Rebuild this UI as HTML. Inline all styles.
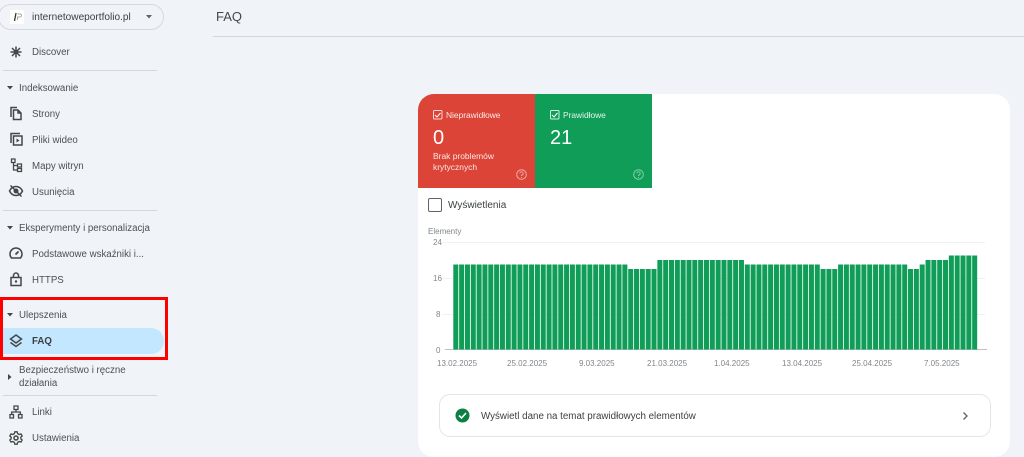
<!DOCTYPE html>
<html lang="pl"><head><meta charset="utf-8"><title>FAQ</title>
<style>
*{box-sizing:border-box}
html,body{margin:0;padding:0}
body{width:1024px;height:456px;overflow:hidden;background:#f0f4f9;position:relative;font-family:"Liberation Sans",sans-serif;color:#4d5051}
.t{position:absolute;white-space:nowrap;font-size:9.7px;line-height:13px}
.sep{position:absolute;left:3px;width:154px;height:1px;background:#d5d8db}
svg.i{position:absolute;width:16px;height:16px;fill:none;stroke:#444746;stroke-width:1.5}
.ax{position:absolute;font-size:8px;color:#80868b;line-height:10px;white-space:nowrap}
.g{position:absolute;left:442px;width:543px;height:1px;background:#f1f1f1}
</style></head><body>

<div style="position:absolute;left:-2px;top:4px;width:166px;height:26px;border:1px solid #d5d9dd;border-radius:13px"></div>
<div style="position:absolute;left:10px;top:10px;width:14px;height:14px;background:#fff"></div>
<svg style="position:absolute;left:10px;top:10px" width="14" height="14"><path d="M6 3L4.500 11" stroke="#333" stroke-width="1.300"/><path d="M7.500 4h2.500a1.500 1.500 0 0 1 0 3H7.500V10" stroke="#aaa" fill="none"/></svg>
<div class="t" style="left:32px;top:11px;font-size:10.100px;color:#3c4043">internetoweportfolio.pl</div>
<svg style="position:absolute;left:146px;top:15px" width="6" height="4"><path d="M0 0H6L3 3.500z" fill="#5f6368"/></svg>

<svg class="i" style="left:8px;top:44px" viewBox="0 0 16 16"><path d="M8 2.500V13.500M2.500 8H13.500M4 4L12 12M12 4L4 12" stroke-width="1.500"/><circle cx="8" cy="8" r="2" fill="#444746" stroke="none"/></svg>
<div class="t" style="left:32px;top:46px">Discover</div>
<div class="sep" style="top:70px"></div>

<svg style="position:absolute;left:7px;top:86px" width="6" height="4"><path d="M0 0H6L3 3.500z" fill="#444746"/></svg>
<div class="t" style="left:19px;top:82px">Indeksowanie</div>

<svg class="i" style="left:8px;top:105px" viewBox="0 0 16 16"><path d="M3 12V2.500H9M5.500 5H10L13 8V14.500H5.500zM10 5V8H13"/></svg>
<div class="t" style="left:32px;top:108px">Strony</div>
<svg class="i" style="left:8px;top:131px" viewBox="0 0 16 16"><path d="M3 12V2.500H12M5.500 5H14V14H5.500z"/><path d="M8.500 7.500L11.500 9.500L8.500 11.500z" fill="#444746" stroke="none"/></svg>
<div class="t" style="left:32px;top:134px">Pliki wideo</div>
<svg class="i" style="left:8px;top:157px" viewBox="0 0 16 16"><path d="M3.500 2H7V5.500H3.500zM9.500 7H13.500V10H9.500zM9.500 11.500H13.500V14.500H9.500zM5.500 5.500V13H9.500M5.500 8.500H9.500" stroke-width="1.300"/></svg>
<div class="t" style="left:32px;top:160px">Mapy witryn</div>
<svg class="i" style="left:8px;top:183px" viewBox="0 0 16 16"><path d="M1.500 8C3 5 5.500 3.500 8 3.500S13 5 14.500 8C13 11 10.500 12.500 8 12.500S3 11 1.500 8z"/><circle cx="8" cy="8" r="2.500" fill="#444746" stroke="none"/><path d="M2.500 2.500L13.500 13.500"/></svg>
<div class="t" style="left:32px;top:186px">Usunięcia</div>
<div class="sep" style="top:210px"></div>

<svg style="position:absolute;left:7px;top:226px" width="6" height="4"><path d="M0 0H6L3 3.500z" fill="#444746"/></svg>
<div class="t" style="left:19px;top:222px">Eksperymenty i personalizacja</div>

<svg class="i" style="left:8px;top:245px" viewBox="0 0 16 16"><path d="M3.500 13A6 6 0 1 1 12.500 13z"/><path d="M7.500 9.500L10.500 6.500" stroke-width="1.800"/></svg>
<div class="t" style="left:32px;top:248px">Podstawowe wskaźniki i...</div>
<svg class="i" style="left:8px;top:271px" viewBox="0 0 16 16"><path d="M3 6.500H13V14.500H3zM5.500 6.500V4.500A2.500 2.500 0 0 1 10.500 4.500V6.500"/><circle cx="8" cy="10.500" r="1.200" fill="#444746" stroke="none"/></svg>
<div class="t" style="left:32px;top:274px">HTTPS</div>

<div style="position:absolute;left:0;top:328px;width:164px;height:26px;background:#c2e7ff;border-radius:0 13px 13px 0"></div>
<div style="position:absolute;left:0;top:297px;width:168px;height:63px;border:3px solid #f00"></div>
<svg style="position:absolute;left:7px;top:313px" width="6" height="4"><path d="M0 0H6L3 3.500z" fill="#444746"/></svg>
<div class="t" style="left:19px;top:309px">Ulepszenia</div>
<svg class="i" style="left:8px;top:333px" viewBox="0 0 16 16"><path d="M8 2L13.500 6L8 10L2.500 6z"/><path d="M2.500 9.500L8 13.500L13.500 9.500"/></svg>
<div class="t" style="left:32px;top:335px;font-weight:bold;color:#3c4043">FAQ</div>

<svg style="position:absolute;left:8px;top:374px" width="4" height="6"><path d="M0 0V6L3.500 3z" fill="#444746"/></svg>
<div class="t" style="left:19px;top:364px">Bezpieczeństwo i ręczne</div>
<div class="t" style="left:19px;top:377px">działania</div>
<div class="sep" style="top:395px"></div>

<svg class="i" style="left:8px;top:404px" viewBox="0 0 16 16"><path d="M6 2H10V5.500H6zM2 10.500H5.500V14H2zM10.500 10.500H14V14H10.500zM8 5.500V8M3.700 10.500V8H12.300V10.500" stroke-width="1.300"/></svg>
<div class="t" style="left:32px;top:406px">Linki</div>
<svg class="i" style="left:8px;top:430px" viewBox="0 0 16 16"><path d="M6.800 1.800H9.200L9.600 3.600L11.200 4.500L13 3.900L14.200 6L12.800 7.200V8.800L14.200 10L13 12.100L11.200 11.500L9.600 12.400L9.200 14.200H6.800L6.400 12.400L4.800 11.500L3 12.100L1.800 10L3.200 8.800V7.200L1.800 6L3 3.900L4.800 4.500L6.400 3.600z" stroke-width="1.300"/><circle cx="8" cy="8" r="2"/></svg>
<div class="t" style="left:32px;top:432px">Ustawienia</div>

<div class="t" style="left:216px;top:9px;font-size:13px;line-height:16px;color:#444746">FAQ</div>
<div style="position:absolute;left:213px;top:36px;width:811px;height:1px;background:#d3d7db"></div>

<div style="position:absolute;left:418px;top:94px;width:592px;height:363px;background:#fff;border-radius:16px;overflow:hidden">
<div style="position:absolute;left:0;top:0;width:117px;height:94px;background:#db4437"></div>
<div style="position:absolute;left:117px;top:0;width:117px;height:94px;background:#0f9d58"></div>
</div>

<svg style="position:absolute;left:433px;top:110px" width="10" height="10"><rect x=".5" y=".5" width="8.500" height="8.500" rx="1" fill="none" stroke="#f6d5d2"/><path d="M2 5L4 7L7.500 3" fill="none" stroke="#fff"/></svg>
<div class="t" style="left:446px;top:109px;font-size:8.400px;color:#fde9e7">Nieprawidłowe</div>
<div class="t" style="left:433px;top:126px;font-size:20px;line-height:24px;color:#fff">0</div>
<div class="t" style="left:433px;top:151px;font-size:8.450px;line-height:11px;color:#fde9e7">Brak problemów<br>krytycznych</div>
<svg style="position:absolute;left:516px;top:169px" width="11" height="11"><circle cx="5.500" cy="5.500" r="4.800" fill="none" stroke="#f0a9a2"/><path d="M3.800 4.300A1.700 1.700 0 1 1 5.500 6.200V7M5.500 8V9" fill="none" stroke="#f0a9a2" stroke-width=".9"/></svg>

<svg style="position:absolute;left:550px;top:110px" width="10" height="10"><rect x=".5" y=".5" width="8.500" height="8.500" rx="1" fill="none" stroke="#cfeede"/><path d="M2 5L4 7L7.500 3" fill="none" stroke="#fff"/></svg>
<div class="t" style="left:563px;top:109px;font-size:8.400px;color:#e4f5ec">Prawidłowe</div>
<div class="t" style="left:550px;top:126px;font-size:20px;line-height:24px;color:#fff">21</div>
<svg style="position:absolute;left:633px;top:169px" width="11" height="11"><circle cx="5.500" cy="5.500" r="4.800" fill="none" stroke="#7fcfa9"/><path d="M3.800 4.300A1.700 1.700 0 1 1 5.500 6.200V7M5.500 8V9" fill="none" stroke="#7fcfa9" stroke-width=".9"/></svg>

<div style="position:absolute;left:428px;top:198px;width:14px;height:14px;border:1.500px solid #5f6368;border-radius:2px"></div>
<div class="t" style="left:448px;top:199px;font-size:10px;color:#3c4043">Wyświetlenia</div>

<div class="ax" style="left:428px;top:227px">Elementy</div>
<div class="ax" style="left:433px;top:238px">24</div>
<div class="ax" style="left:433px;top:274px">16</div>
<div class="ax" style="left:436px;top:310px">8</div>
<div class="ax" style="left:436px;top:346px">0</div>
<div class="g" style="top:242px"></div><div class="g" style="top:278px"></div><div class="g" style="top:314px"></div>
<div style="position:absolute;left:445px;top:349px;width:542px;height:1px;background:#bdc1c6"></div>

<svg style="position:absolute;left:0;top:0" width="1024" height="456">
<path fill="#0f9d58" d="M453.300 264.500h5v85h-5zM459.130 264.500h5v85h-5zM464.960 264.500h5v85h-5zM470.790 264.500h5v85h-5zM476.620 264.500h5v85h-5zM482.450 264.500h5v85h-5zM488.280 264.500h5v85h-5zM494.110 264.500h5v85h-5zM499.940 264.500h5v85h-5zM505.770 264.500h5v85h-5zM511.600 264.500h5v85h-5zM517.430 264.500h5v85h-5zM523.260 264.500h5v85h-5zM529.090 264.500h5v85h-5zM534.920 264.500h5v85h-5zM540.750 264.500h5v85h-5zM546.580 264.500h5v85h-5zM552.410 264.500h5v85h-5zM558.240 264.500h5v85h-5zM564.070 264.500h5v85h-5zM569.900 264.500h5v85h-5zM575.730 264.500h5v85h-5zM581.560 264.500h5v85h-5zM587.390 264.500h5v85h-5zM593.220 264.500h5v85h-5zM599.050 264.500h5v85h-5zM604.880 264.500h5v85h-5zM610.710 264.500h5v85h-5zM616.540 264.500h5v85h-5zM622.370 264.500h5v85h-5zM628.200 269h5v80.500h-5zM634.030 269h5v80.500h-5zM639.860 269h5v80.500h-5zM645.690 269h5v80.500h-5zM651.520 269h5v80.500h-5zM657.350 260h5v89.500h-5zM663.180 260h5v89.500h-5zM669.010 260h5v89.500h-5zM674.840 260h5v89.500h-5zM680.670 260h5v89.500h-5zM686.500 260h5v89.500h-5zM692.330 260h5v89.500h-5zM698.160 260h5v89.500h-5zM703.990 260h5v89.500h-5zM709.820 260h5v89.500h-5zM715.650 260h5v89.500h-5zM721.480 260h5v89.500h-5zM727.310 260h5v89.500h-5zM733.140 260h5v89.500h-5zM738.970 260h5v89.500h-5zM744.800 264.500h5v85h-5zM750.630 264.500h5v85h-5zM756.460 264.500h5v85h-5zM762.290 264.500h5v85h-5zM768.120 264.500h5v85h-5zM773.950 264.500h5v85h-5zM779.780 264.500h5v85h-5zM785.610 264.500h5v85h-5zM791.440 264.500h5v85h-5zM797.270 264.500h5v85h-5zM803.100 264.500h5v85h-5zM808.930 264.500h5v85h-5zM814.760 264.500h5v85h-5zM820.590 269h5v80.500h-5zM826.420 269h5v80.500h-5zM832.250 269h5v80.500h-5zM838.080 264.500h5v85h-5zM843.910 264.500h5v85h-5zM849.740 264.500h5v85h-5zM855.570 264.500h5v85h-5zM861.400 264.500h5v85h-5zM867.230 264.500h5v85h-5zM873.060 264.500h5v85h-5zM878.890 264.500h5v85h-5zM884.720 264.500h5v85h-5zM890.550 264.500h5v85h-5zM896.380 264.500h5v85h-5zM902.210 264.500h5v85h-5zM908.040 269h5v80.500h-5zM913.870 269h5v80.500h-5zM919.700 264.500h5v85h-5zM925.530 260h5v89.500h-5zM931.360 260h5v89.500h-5zM937.190 260h5v89.500h-5zM943.020 260h5v89.500h-5zM948.850 255.500h5v94h-5zM954.680 255.500h5v94h-5zM960.510 255.500h5v94h-5zM966.340 255.500h5v94h-5zM972.170 255.500h5v94h-5z"/>
</svg>

<div class="ax" style="left:437px;top:359px">13.02.2025</div>
<div class="ax" style="left:507px;top:359px">25.02.2025</div>
<div class="ax" style="left:579px;top:359px">9.03.2025</div>
<div class="ax" style="left:647px;top:359px">21.03.2025</div>
<div class="ax" style="left:714px;top:359px">1.04.2025</div>
<div class="ax" style="left:782px;top:359px">13.04.2025</div>
<div class="ax" style="left:852px;top:359px">25.04.2025</div>
<div class="ax" style="left:924px;top:359px">7.05.2025</div>

<div style="position:absolute;left:439px;top:394px;width:552px;height:43px;border:1px solid #e3e5e8;border-radius:11px"></div>
<svg style="position:absolute;left:455px;top:408px" width="16" height="16"><circle cx="7.500" cy="7.500" r="7" fill="#0b8043"/><path d="M4 7.500L6.500 10L11 5" fill="none" stroke="#fff" stroke-width="1.600"/></svg>
<div class="t" style="left:481px;top:410px;font-size:9.770px;color:#3c4043">Wyświetl dane na temat prawidłowych elementów</div>
<svg style="position:absolute;left:962px;top:411px" width="7" height="10"><path d="M1.500 1.500L5 5L1.500 8.500" fill="none" stroke="#5f6368" stroke-width="1.300"/></svg>

</body></html>
